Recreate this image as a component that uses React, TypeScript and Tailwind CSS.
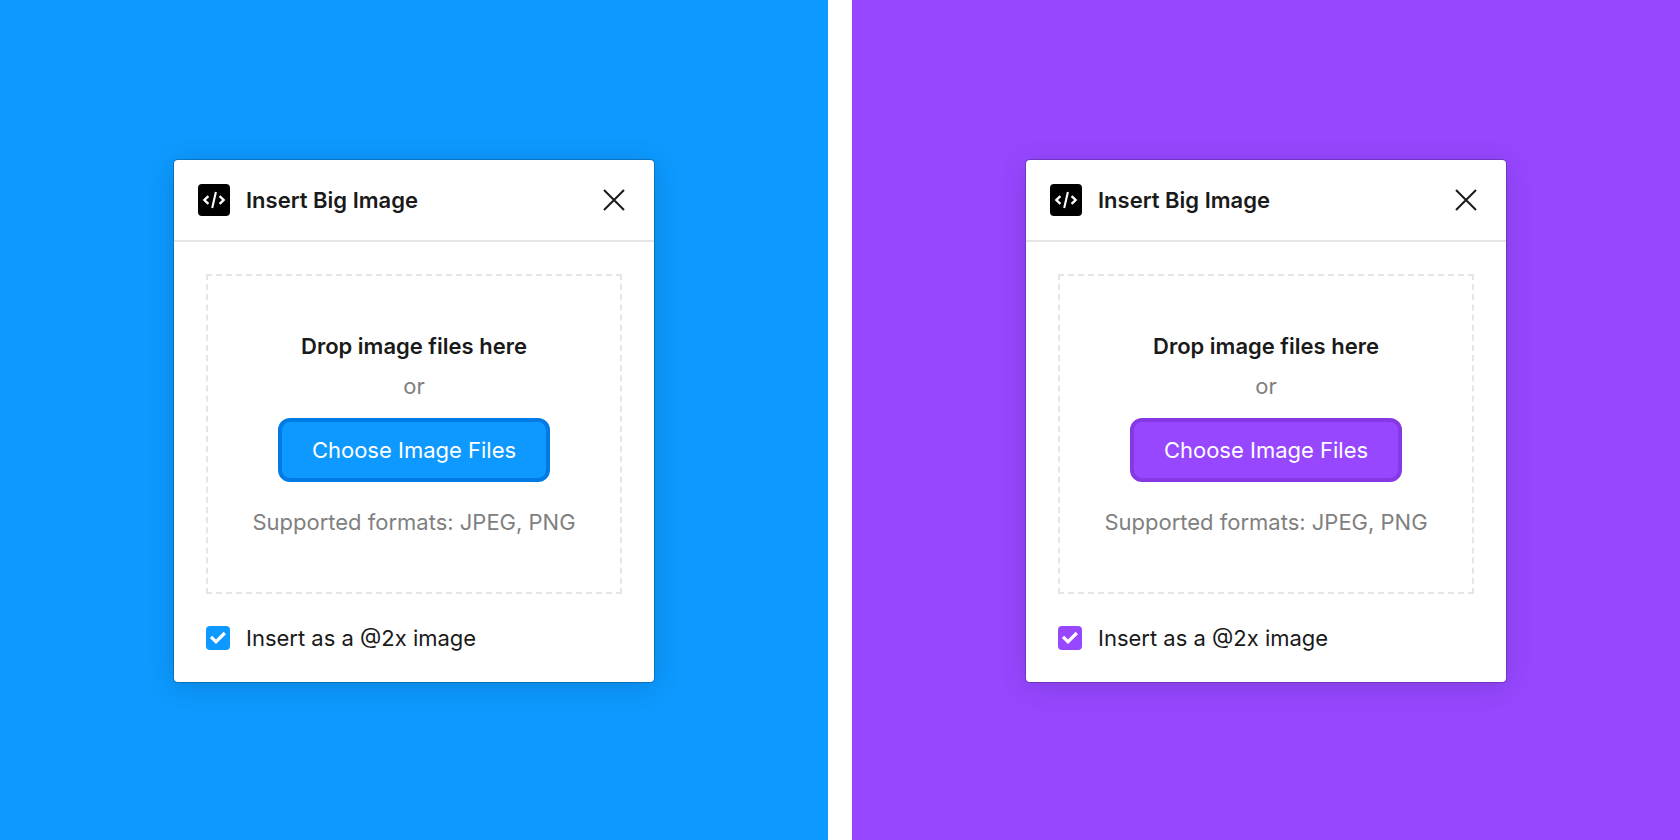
import { useId } from "react";

type Theme = {
  surface: string;
  button: string;
  checkbox: string;
};

const themes: Theme[] = [
  {
    surface: "bg-[#0d99ff]",
    button: "bg-[#0d99ff] border-[#007be5]",
    checkbox: "checked:bg-[#0d99ff] checked:border-[#0d99ff]",
  },
  {
    surface: "bg-[#9747ff]",
    button: "bg-[#9747ff] border-[#8638e5]",
    checkbox: "checked:bg-[#9747ff] checked:border-[#9747ff]",
  },
];

function CodeIcon() {
  return (
    <svg
      viewBox="0 0 32 32"
      className="size-8 shrink-0"
      fill="none"
      stroke="white"
      aria-hidden="true"
    >
      <rect width="32" height="32" rx="4" fill="black" stroke="none" />
      <path
        d="M10.4 12.2 6.4 16l4 3.8M21.6 12.2l4 3.8-4 3.8"
        strokeWidth="2.4"
      />
      <path d="M17.9 8 14.2 24" strokeWidth="2.1" />
    </svg>
  );
}

function PluginDialog({ theme }: { theme: Theme }) {
  const id = useId();
  return (
    <section
      aria-labelledby={`${id}-title`}
      className="w-full max-w-[480px] rounded-[4px] bg-white shadow-[0_0_0_1px_rgba(0,0,0,0.2),0_4px_28px_rgba(0,0,0,0.15)]"
    >
      <header className="flex items-center gap-4 border-b-2 border-[#e6e6e6] p-6">
        <CodeIcon />
        <h2 id={`${id}-title`} className="flex-1 font-semibold">
          Insert Big Image
        </h2>
        <button type="button" aria-label="Close" className="size-8">
          <svg
            viewBox="0 0 32 32"
            className="size-8"
            fill="none"
            stroke="currentColor"
            strokeWidth="2"
            aria-hidden="true"
          >
            <path d="m6 6 20 20M26 6 6 26" />
          </svg>
        </button>
      </header>

      <div className="flex flex-col gap-8 p-8">
        <div className="flex flex-col items-center border-2 border-dashed border-[#e6e6e6] py-[50px] text-center leading-10">
          <p className="font-semibold">Drop image files here</p>
          <p className="text-[#808080]">or</p>
          <button
            type="button"
            className={`mt-3 mb-5 h-16 rounded-[12px] border-4 px-[30px] text-white ${theme.button}`}
          >
            Choose Image Files
          </button>
          <p className="text-[#808080]">Supported formats: JPEG, PNG</p>
        </div>

        <div className="flex items-center gap-4">
          <span className="grid size-6 shrink-0">
            <input
              id={`${id}-retina`}
              type="checkbox"
              defaultChecked
              className={`peer col-start-1 row-start-1 size-6 appearance-none rounded-[4px] border-2 border-[#b3b3b3] ${theme.checkbox}`}
            />
            <svg
              viewBox="0 0 24 24"
              className="pointer-events-none invisible col-start-1 row-start-1 size-6 peer-checked:visible"
              fill="none"
              stroke="white"
              strokeWidth="3.2"
              aria-hidden="true"
            >
              <path d="m5 10.8 5 5 8.8-8.8" />
            </svg>
          </span>
          <label htmlFor={`${id}-retina`}>Insert as a @2x image</label>
        </div>
      </div>
    </section>
  );
}

export default function App() {
  return (
    <main className="grid min-h-screen grid-cols-2 gap-6 bg-white font-['Inter',sans-serif] text-[22px] leading-6 text-[#1a1a1a]">
      {themes.map((theme) => (
        <div
          key={theme.surface}
          className={`flex items-center justify-center pt-0.5 ${theme.surface}`}
        >
          <PluginDialog theme={theme} />
        </div>
      ))}
    </main>
  );
}
